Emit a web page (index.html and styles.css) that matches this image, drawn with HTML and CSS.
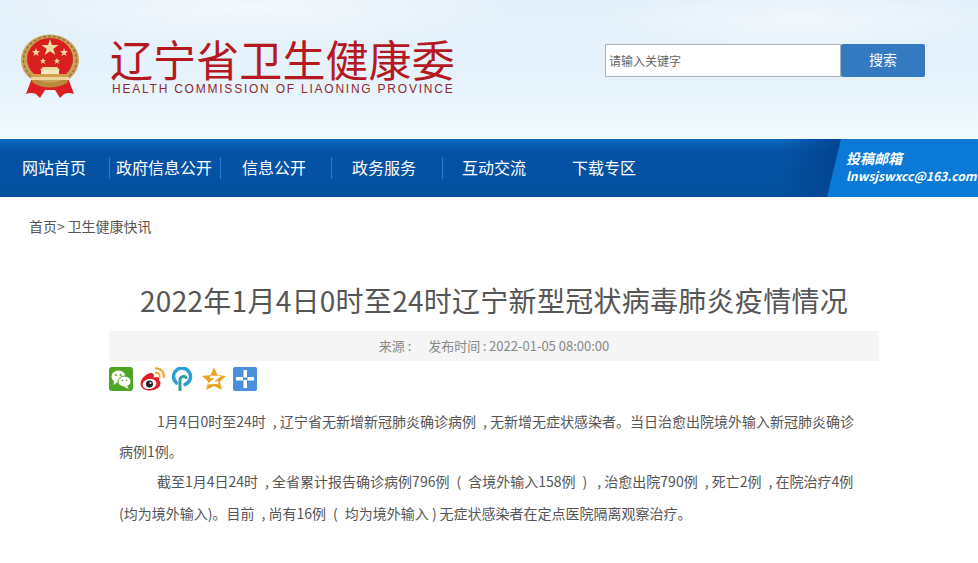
FILE: index.html
```html
<!DOCTYPE html>
<html lang="zh-CN">
<head>
    <meta charset="UTF-8">
    <title>2022年1月4日0时至24时辽宁新型冠状病毒肺炎疫情情况</title>
    <link rel="stylesheet" href="styles.css">
</head>
<body>
    <header class="top">
        <svg class="emblem" width="62" height="66" viewBox="0 0 62 66">
            <path d="M13 44 L7 60 Q12 58 17 60 L21 64 L26 56 L36 56 L41 64 L45 60 Q50 58 55 60 L49 44 Z" fill="#dc1f22"/>
            <ellipse cx="31" cy="26" rx="29" ry="25.500" fill="#c9a25a"/>
            <ellipse cx="31" cy="26" rx="26.500" ry="23.500" fill="none" stroke="#9a6f30" stroke-width="1.500" stroke-dasharray="3 2"/>
            <ellipse cx="31" cy="25" rx="23" ry="21" fill="#d81e1e"/>
            <path d="M10 40 Q31 58 52 40 L48 49 Q31 58 14 49 Z" fill="#b98a3c"/>
            <polygon points="31,5 33,11 39.500,11 34.300,15 36.300,21 31,17.300 25.700,21 27.700,15 22.500,11 29,11" fill="#f3d9a0"/>
            <polygon points="17,14 18,17 21,17 18.700,19 19.500,22 17,20.300 14.500,22 15.300,19 13,17 16,17" fill="#f3d9a0"/>
            <polygon points="45,14 46,17 49,17 46.700,19 47.500,22 45,20.300 42.500,22 43.300,19 41,17 44,17" fill="#f3d9a0"/>
            <polygon points="24,24 25,26 27,26 25.300,27.500 26,30 24,28.500 22,30 22.700,27.500 21,26 23,26" fill="#f3d9a0"/>
            <polygon points="38,24 39,26 41,26 39.300,27.500 40,30 38,28.500 36,30 36.700,27.500 35,26 37,26" fill="#f3d9a0"/>
            <path d="M24 33 H38 L41 36 H21 Z" fill="#efd79e"/>
            <rect x="22" y="36" width="18" height="4" fill="#f6e8c6"/>
            <rect x="15" y="40" width="32" height="3" fill="#d0a04a"/>
            <rect x="12" y="43" width="38" height="3" fill="#ecd49a"/>
        </svg>
        <div class="brand">
            <div class="brand-name">辽宁省卫生健康委</div>
            <div class="brand-en">HEALTH COMMISSION OF LIAONING PROVINCE</div>
        </div>
        <form class="search">
            <input type="text" placeholder="请输入关键字">
            <button type="button">搜索</button>
        </form>
    </header>

    <nav class="nav">
        <a class="nav-item first" href="#">网站首页</a>
        <a class="nav-item second" href="#">政府信息公开</a>
        <a class="nav-item third" href="#">信息公开</a>
        <a class="nav-item" href="#">政务服务</a>
        <a class="nav-item plain" href="#">互动交流</a>
        <a class="nav-item plain" href="#">下载专区</a>
        <div class="mailbox">
            <b>投稿邮箱</b>
            <b class="mail">lnwsjswxcc@163.com</b>
        </div>
    </nav>

    <div class="crumb">首页&gt;&thinsp;卫生健康快讯</div>

    <main class="article">
        <h1>2022年1月4日0时至24时辽宁新型冠状病毒肺炎疫情情况</h1>
        <div class="meta"><span>来源&nbsp;:</span><span>发布时间&thinsp;:&thinsp;2022-01-05 08:00:00</span></div>
        <div class="share">
            <svg width="24" height="24" viewBox="0 0 24 24">
                <rect width="24" height="24" rx="3" fill="#4ea521"/>
                <ellipse cx="9.500" cy="9.500" rx="7" ry="6" fill="#fff"/>
                <path d="M5 13 L4.500 18 L9 15 Z" fill="#fff"/>
                <ellipse cx="15.500" cy="14.500" rx="6.500" ry="5.500" fill="#fff" stroke="#4ea521"/>
                <path d="M18 19 L20 22 L15 20 Z" fill="#fff"/>
                <circle cx="7" cy="8" r="1" fill="#4ea521"/>
                <circle cx="11.500" cy="8" r="1" fill="#4ea521"/>
                <circle cx="13.500" cy="13.500" r=".8" fill="#4ea521"/>
                <circle cx="17.500" cy="13.500" r=".8" fill="#4ea521"/>
            </svg>
            <svg width="25" height="24" viewBox="0 0 25 24">
                <path d="M0.500 16.500 C0.500 11 8 5 12 6 C14.500 7 14 9.500 13.500 10.500 C18 9 20.500 10.500 19 13.500 C22 14.500 21.500 23 10 23.500 C4.500 23.500 0.500 21 0.500 16.500 Z" fill="#db2127"/>
                <ellipse cx="9.500" cy="17" rx="7" ry="5" fill="#fff" transform="rotate(-12 9.500 17)"/>
                <circle cx="9.500" cy="17" r="3.500" fill="#222"/>
                <circle cx="10.500" cy="16" r="1" fill="#fff"/>
                <path d="M15 1.500 C20.500 0.500 25 5.500 23.500 11" fill="none" stroke="#f2a53a" stroke-width="2.200"/>
                <path d="M15 6 C18 5 20.500 7.500 19.500 10.500" fill="none" stroke="#f2a53a" stroke-width="2"/>
            </svg>
            <svg width="23" height="24" viewBox="0 0 23 24">
                <path d="M4.500 16 A8.500 8.500 0 1 1 13 17.500" fill="none" stroke="#2b9fd6" stroke-width="3.500" stroke-linecap="round"/>
                <path d="M8 23 V12.500 A3.500 3.500 0 0 1 14 10.500" fill="none" stroke="#2f9f9a" stroke-width="3" stroke-linecap="round"/>
            </svg>
            <svg width="24" height="24" viewBox="0 0 24 24">
                <polygon points="12,0.500 15.500,8 24,9 18,14.500 19.800,23 12,19 4.200,23 6,14.500 0,9 8.500,8" fill="#eea320"/>
                <polyline points="8,10 16,10 8.500,16 16.500,15.500" fill="none" stroke="#fff" stroke-width="2.400"/>
            </svg>
            <svg width="24" height="24" viewBox="0 0 24 24">
                <rect width="24" height="24" rx="2" fill="#4a90dc"/>
                <rect x="10.500" y="3" width="3.500" height="7.500" fill="#fff"/>
                <rect x="10.500" y="13" width="3.500" height="8" fill="#fff"/>
                <rect x="3" y="10" width="7" height="3.500" fill="#fff"/>
                <rect x="14.500" y="10" width="6.500" height="3.500" fill="#fff"/>
            </svg>
        </div>
        <div class="content">
            <p>1月4日0时至24时&ensp;,&nbsp;辽宁省无新增新冠肺炎确诊病例&ensp;,&nbsp;无新增无症状感染者。当日治愈出院境外输入新冠肺炎确诊病例1例。</p>
            <p class="tall">截至1月4日24时&ensp;,&nbsp;全省累计报告确诊病例796例&ensp;(&ensp;含境外输入158例&ensp;)&nbsp;&ensp;,&nbsp;治愈出院790例&ensp;,&nbsp;死亡2例&ensp;,&nbsp;在院治疗4例(均为境外输入)。目前&ensp;,&nbsp;尚有16例&ensp;(&ensp;均为境外输入&nbsp;)&thinsp;无症状感染者在定点医院隔离观察治疗。</p>
        </div>
    </main>
</body>
</html>
```

FILE: styles.css
```css
*{
    margin: 0;
    padding: 0;
    box-sizing: border-box;
    font-family: "Noto Sans CJK SC", "Noto Sans", sans-serif;
}
body{
    background: #fff;
    overflow-x: hidden;
}
.top{
    height: 139px;
    display: flex;
    align-items: flex-start;
    background:
        radial-gradient(ellipse 260px 40px at 250px 8px, rgba(255,255,255,.6), transparent),
        radial-gradient(ellipse 200px 30px at 800px 20px, rgba(255,255,255,.5), transparent),
        linear-gradient(180deg, #e3f0fa 0%, #e6f3fc 60%, #f2fbff 100%);
}
.emblem{
    margin: 34px 0 0 19px;
}
.brand{
    margin: 35px 0 0 29px;
    width: 350px;
}
.brand-name{
    font-size: 43px;
    line-height: 46px;
    letter-spacing: .1px;
    color: #b5191f;
    white-space: nowrap;
}
.brand-en{
    font-family: "Liberation Sans", sans-serif;
    font-size: 12px;
    line-height: 14px;
    letter-spacing: 1.77px;
    color: #8e2a2e;
    margin: 1px 0 0 2px;
    white-space: nowrap;
}
.search{
    display: flex;
    margin: 44px 0 0 145px;
}
.search input{
    width: 236px;
    height: 33px;
    border: 1px solid #aab2ba;
    outline: 0;
    background: #fff;
    padding: 0 3px;
    font-size: 12px;
}
.search input::placeholder{
    color: #666;
}
.search button{
    width: 84px;
    height: 33px;
    border: 0;
    border-radius: 2px;
    background: #337ac0;
    color: #fff;
    font-size: 14px;
    padding-bottom: 3px;
}
.nav{
    height: 58px;
    display: flex;
    align-items: center;
    background:
        linear-gradient(90deg, transparent 780px, #03438c 845px),
        linear-gradient(180deg, #0868bf 0%, #0553a6 22%, #04509f 100%);
    position: relative;
}
.nav-item{
    display: block;
    width: 111px;
    height: 22px;
    line-height: 20px;
    padding-left: 20px;
    font-size: 16px;
    color: #fff;
    text-decoration: none;
    white-space: nowrap;
    border-right: 1px solid #2a7fce;
    flex-shrink: 0;
}
.nav-item.first{
    width: 110px;
    padding-left: 22px;
}
.nav-item.second{
    padding-left: 6px;
}
.nav-item.third{
    padding-left: 21px;
}
.nav-item.plain{
    border-right: 0;
    width: 110px;
    padding-left: 19px;
}
.mailbox{
    position: absolute;
    top: 0;
    right: 0;
    width: 151px;
    height: 58px;
    padding: 10px 0 0 19px;
    background: #0a7ad6;
    clip-path: polygon(14px 0, 100% 0, 100% 100%, 0 100%);
    color: #fff;
    font-style: italic;
    font-size: 14px;
    line-height: 18px;
    white-space: nowrap;
}
.mailbox b{
    display: block;
}
.mailbox .mail{
    font-size: 12.200px;
}
.crumb{
    margin: 20px 0 0 29px;
    font-size: 14px;
    line-height: 18px;
    color: #555;
}
.article{
    width: 770px;
    margin: 0 0 0 109px;
}
.article h1{
    margin-top: 45px;
    font-size: 28px;
    line-height: 40px;
    letter-spacing: .28px;
    font-weight: 400;
    color: #555;
    text-align: center;
}
.meta{
    margin-top: 11px;
    height: 30px;
    line-height: 30px;
    background: #f5f5f5;
    font-size: 13px;
    color: #888;
    text-align: center;
}
.meta span + span{
    margin-left: 17px;
}
.share{
    display: flex;
    align-items: center;
    gap: 7px;
    margin-top: 6px;
    height: 24px;
}
.content{
    margin: 15px 0 0 10px;
    width: 745px;
}
.content p{
    font-size: 14px;
    line-height: 30px;
    color: #555;
    text-indent: 38px;
}
.content p.tall{
    line-height: 32px;
    margin-top: -1px;
}
```
